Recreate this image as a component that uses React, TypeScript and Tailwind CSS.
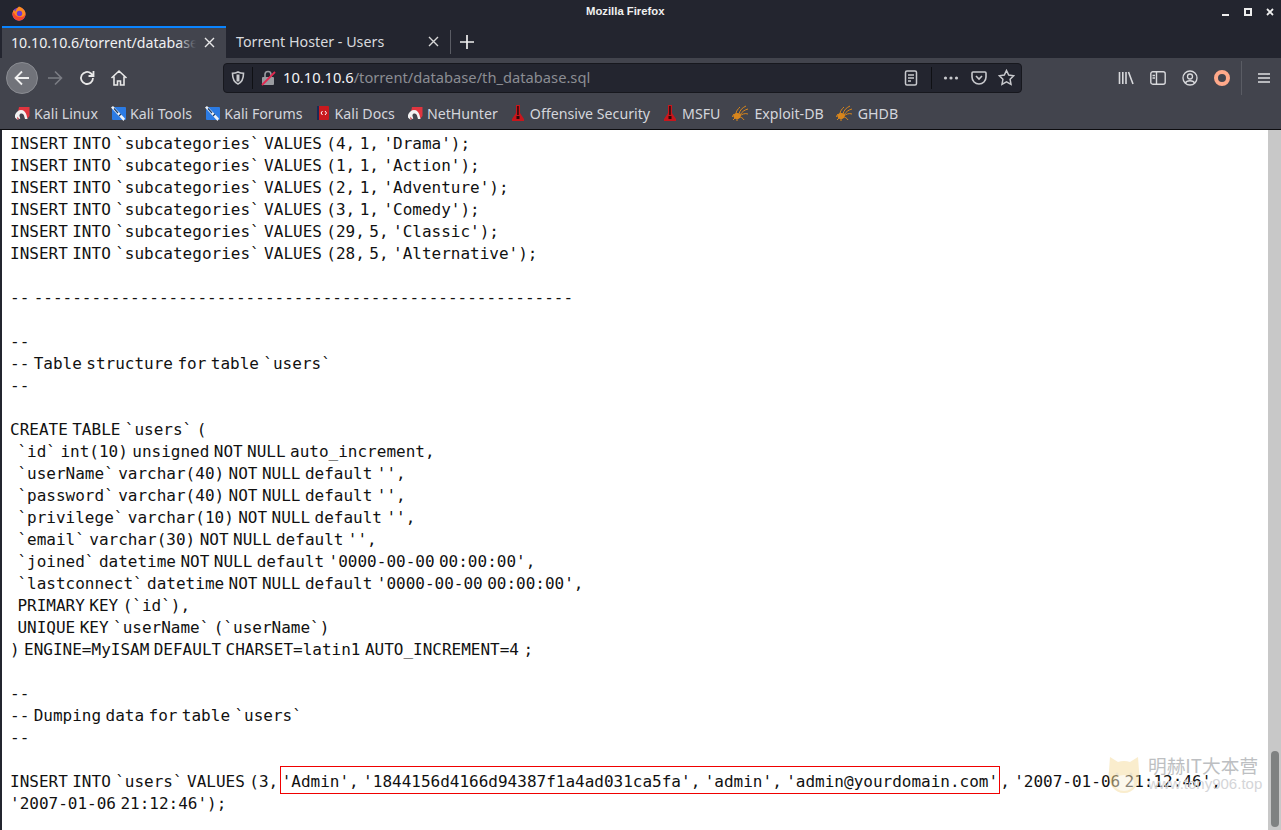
import React from "react";

const lines = [
  "INSERT INTO `subcategories` VALUES (4, 1, 'Drama');",
  "INSERT INTO `subcategories` VALUES (1, 1, 'Action');",
  "INSERT INTO `subcategories` VALUES (2, 1, 'Adventure');",
  "INSERT INTO `subcategories` VALUES (3, 1, 'Comedy');",
  "INSERT INTO `subcategories` VALUES (29, 5, 'Classic');",
  "INSERT INTO `subcategories` VALUES (28, 5, 'Alternative');",
  "",
  "-- --------------------------------------------------------",
  "",
  "--",
  "-- Table structure for table `users`",
  "--",
  "",
  "CREATE TABLE `users` (",
  " `id` int(10) unsigned NOT NULL auto_increment,",
  " `userName` varchar(40) NOT NULL default '',",
  " `password` varchar(40) NOT NULL default '',",
  " `privilege` varchar(10) NOT NULL default '',",
  " `email` varchar(30) NOT NULL default '',",
  " `joined` datetime NOT NULL default '0000-00-00 00:00:00',",
  " `lastconnect` datetime NOT NULL default '0000-00-00 00:00:00',",
  " PRIMARY KEY (`id`),",
  " UNIQUE KEY `userName` (`userName`)",
  ") ENGINE=MyISAM DEFAULT CHARSET=latin1 AUTO_INCREMENT=4 ;",
  "",
  "--",
  "-- Dumping data for table `users`",
  "--",
  "",
];

function Fox() {
  return (
    <svg width="16" height="16" viewBox="0 0 16 16">
      <circle cx="8" cy="9" r="6.600" fill="#7b3fc9" />
      <path d="M8 1.500c3 1 6.500 3.500 6.500 7.500a6.500 6.500 0 0 1-13 0c0-2 .8-3.500 1.800-4.500 0 1 .5 1.700 1.200 2C5 4 6.500 3 8 1.500z" fill="#ff8a1f" />
      <path d="M1.500 9a6.500 6.500 0 0 0 13 0c-1 2-3 3.500-6 3S3.500 10 3 7.500c-1 .5-1.500 1-1.500 1.500z" fill="#f5452f" />
      <circle cx="8.500" cy="8.500" r="2.700" fill="#6d3bd1" />
    </svg>
  );
}

function KaliRed() {
  return (
    <svg width="16" height="16" viewBox="0 0 16 16">
      <path d="M5 2h10.500v9L13 14h-1.500L10 10c-.5-1.500-2-2.500-3.500-1.800L5 9.500 4 7z" fill="#e0353f" />
      <path d="M1 10c1-3 3.500-5 6-5 3 0 4.500 2 5.500 5l1 4h-2.500l-1-3.500C9.500 9 8.500 8.200 7 8.500 5.800 8.800 5.200 9.800 5.500 11l.8 2.500-3 1.200L1 12.500z" fill="#f2f2f2" />
      <path d="M3.300 11.500l1.800 2.500-1.800.8z" fill="#c7303a" />
    </svg>
  );
}

function KaliBlue() {
  return (
    <svg width="16" height="16" viewBox="0 0 16 16">
      <rect x="2" y="2" width="14" height="13" fill="#2b7be4" rx="1" />
      <path d="M1 2.500L3 1l12 12.500-1.500 2.500z" fill="#eef2f7" />
      <path d="M4 3.500l4 4.500M9 11l2-2" stroke="#1d3c66" strokeWidth="1.200" />
    </svg>
  );
}

function Book() {
  return (
    <svg width="16" height="16" viewBox="0 0 16 16">
      <rect x="2" y="1" width="12" height="14" fill="#c9191e" rx="1" />
      <rect x="2" y="1" width="2" height="14" fill="#1b2a55" />
      <path d="M7.500 6L6 8l1.500 2M10 6l1.500 2L10 10" stroke="#fff" strokeWidth="1" fill="none" />
    </svg>
  );
}

function Flask() {
  return (
    <svg width="16" height="18" viewBox="0 0 16 18">
      <path d="M6 1h4v8l4 6v2H2v-2l4-6z" fill="#c8161c" />
      <path d="M7.200 2h1.500v9H7.200z" fill="#2a0a0a" />
      <rect x="6.500" y="12" width="3" height="3" fill="#2a0a0a" />
    </svg>
  );
}

function Spider() {
  return (
    <svg width="18" height="16" viewBox="0 0 18 16" fill="none" stroke="#d9861c" strokeWidth="1">
      <ellipse cx="5" cy="11" rx="3.200" ry="2.600" fill="#d9861c" />
      <path d="M7 9c1-4 3-6 7-8M8 10c2-3 4-5 8-6M8 11c2-2 5-3 8-2M7 12c2 0 4 1 5 3M4 9C4 6 6 4 8 2M3 13l-2 2M5 14v2M2 9L0 12" />
    </svg>
  );
}

function Mark({ icon, label }: { icon: React.ReactNode; label: string }) {
  return (
    <div className="flex items-center gap-[4px]">
      {icon}
      <span className="text-[14.200px] text-[#d4d6dc] whitespace-nowrap">{label}</span>
    </div>
  );
}

export default function App() {
  return (
    <div
      className="w-[1281px] h-[830px] overflow-hidden flex flex-col bg-white"
      style={{ fontFamily: "'Noto Sans', sans-serif" }}
    >
      <div className="h-[58px] shrink-0 bg-[#23252f] flex flex-col">
        <div className="h-[26px] flex items-center relative">
          <div className="pl-[11px]"><Fox /></div>
          <span className="absolute left-[586px] top-[2px] text-[11.300px] font-bold text-[#f0f0f0] leading-[18px]" style={{ fontFamily: "'Liberation Sans', sans-serif" }}>
            Mozilla Firefox
          </span>
          <div className="ml-auto pr-[7px] flex items-center gap-[14px] pb-[3px]">
            <svg width="8" height="8" viewBox="0 0 8 8"><rect y="6" width="7" height="2" fill="#eee" /></svg>
            <svg width="8" height="8" viewBox="0 0 8 8"><rect x="1" y="1" width="6" height="6" fill="none" stroke="#eee" strokeWidth="2" /></svg>
            <svg width="8" height="8" viewBox="0 0 8 8"><path d="M1 1l6 6M7 1L1 7" stroke="#eee" strokeWidth="1.800" /></svg>
          </div>
        </div>
        <div className="flex-1 flex items-stretch pl-[2px]">
          <div className="w-[224px] bg-[#42444d] border-t-2 border-[#0a84ff] flex items-center pl-[9px] pr-[11px] pb-[1px] text-[14.200px] text-[#f0f1f3]">
            <div className="relative flex-1 overflow-hidden">
              <span className="whitespace-nowrap">10.10.10.6/torrent/database/</span>
              <div className="absolute right-0 top-0 bottom-0 w-[18px] bg-gradient-to-r from-transparent to-[#42444d]" />
            </div>
            <svg className="ml-[8px] shrink-0" width="11" height="11" viewBox="0 0 11 11"><path d="M1 1l9 9M10 1l-9 9" stroke="#e8e8e8" strokeWidth="1.400" /></svg>
          </div>
          <div className="w-[224px] flex items-center pl-[10px] pr-[11px] pb-[1px] text-[14.300px] text-[#d8d9dd]">
            <span className="flex-1 whitespace-nowrap">Torrent Hoster - Users</span>
            <svg width="11" height="11" viewBox="0 0 11 11"><path d="M1 1l9 9M10 1l-9 9" stroke="#d8d8d8" strokeWidth="1.400" /></svg>
          </div>
          <div className="w-px h-[24px] my-auto bg-[#5a5c64]" />
          <div className="flex items-center pl-[9px]">
            <svg width="14" height="14" viewBox="0 0 14 14"><path d="M7 0v14M0 7h14" stroke="#eee" strokeWidth="1.700" /></svg>
          </div>
        </div>
      </div>

      <div className="h-[39px] shrink-0 bg-[#42444d] flex items-center pl-[6px]">
        <div className="w-8 h-8 rounded-full bg-[#71737a] border border-[#8a8c92] flex items-center justify-center">
          <svg width="18" height="18" viewBox="0 0 18 18" fill="none" stroke="#f0f0f0" strokeWidth="1.800"><path d="M16 9H2M9 2.500L2.500 9 9 15.500" /></svg>
        </div>
        <svg className="ml-[8px]" width="18" height="18" viewBox="0 0 18 18" fill="none" stroke="#7b7d84" strokeWidth="1.600"><path d="M2 9h14M9 2.500L15.500 9 9 15.500" /></svg>
        <svg className="ml-[14px]" width="18" height="18" viewBox="0 0 18 18" fill="none" stroke="#e8e8e8" strokeWidth="1.800"><path d="M15 9a6 6 0 1 1-2-4.500L15 6.500M15.500 2v5h-5" /></svg>
        <svg className="ml-[14px]" width="18" height="18" viewBox="0 0 18 18" fill="none" stroke="#e8e8e8" strokeWidth="1.600"><path d="M1.500 9L9 2l7.500 7M4 7.500V16h3.500v-4h3v4H14V7.500" /></svg>

        <div className="ml-[95px] w-[799px] h-[30px] rounded-[4px] bg-[#23252f] border border-[#17181e] flex items-center">
          <svg className="ml-[7px]" width="14" height="14" viewBox="0 0 14 14" fill="none" stroke="#c8c9cd" strokeWidth="1.600"><path d="M7 1c2 1 4 1.300 5.500 1.300C12.500 8 10.500 11.500 7 13 3.500 11.500 1.500 8 1.500 2.300 3 2.300 5 2 7 1z" /><path d="M7 3.500v7" strokeWidth="3" /></svg>
          <div className="w-px h-[22px] bg-[#0f1014] ml-[7px]" />
          <svg className="ml-[7px]" width="16" height="16" viewBox="0 0 16 16"><rect x="2" y="7" width="12" height="8" rx="1" fill="#9a9ba0" /><path d="M5 7V4.500a3 3 0 0 1 6 0V7" fill="none" stroke="#9a9ba0" strokeWidth="1.600" /><path d="M2 15L15 2" stroke="#e22850" strokeWidth="1.800" /></svg>
          <span className="ml-[7px] text-[14.700px] text-[#f4f4f6] whitespace-nowrap">
            10.10.10.6<span className="text-[#8b8d93]">/torrent/database/th_database.sql</span>
          </span>
          <svg className="ml-auto" width="14" height="16" viewBox="0 0 14 16" fill="none" stroke="#c8c9cd" strokeWidth="1.500"><rect x="1.500" y="1" width="11" height="14" rx="1.500" /><path d="M4 5h6M4 8h6M4 11h3" /></svg>
          <div className="w-px h-[22px] bg-[#0f1014] ml-[13px]" />
          <svg className="ml-[11px]" width="16" height="4" viewBox="0 0 16 4" fill="#c8c9cd"><circle cx="2.500" cy="2" r="1.600" /><circle cx="8" cy="2" r="1.600" /><circle cx="13.500" cy="2" r="1.600" /></svg>
          <svg className="ml-[12px]" width="16" height="16" viewBox="0 0 16 16" fill="none" stroke="#c8c9cd" strokeWidth="1.600"><path d="M2 2h12a1 1 0 0 1 1 1v4a7 7 0 0 1-14 0V3a1 1 0 0 1 1-1z" /><path d="M5 6l3 3 3-3" /></svg>
          <svg className="ml-[11px] mr-[6px]" width="17" height="17" viewBox="0 0 17 17" fill="none" stroke="#c8c9cd" strokeWidth="1.500"><path d="M8.500 1.500l2.200 4.600 5 .7-3.600 3.500.9 5-4.500-2.400L4 15.300l.9-5L1.300 6.800l5-.7z" /></svg>
        </div>

        <svg className="ml-[96px]" width="16" height="16" viewBox="0 0 16 16" fill="none" stroke="#d8d9dc" strokeWidth="1.600"><path d="M1.500 2v12M4.800 2v12M8 2v12M10.500 2l4.500 12" /></svg>
        <svg className="ml-[16px]" width="16" height="14" viewBox="0 0 16 14" fill="none" stroke="#d8d9dc" strokeWidth="1.400"><rect x=".8" y=".8" width="14.400" height="12.400" rx="2" /><path d="M6.500 1v12M2.500 4.500h2.500M2.500 7h2.500" /></svg>
        <svg className="ml-[16px]" width="16" height="16" viewBox="0 0 16 16" fill="none" stroke="#d8d9dc" strokeWidth="1.300"><circle cx="8" cy="8" r="7" /><circle cx="8" cy="6.500" r="2.500" /><path d="M3.500 13c1-3 8-3 9 0" /></svg>
        <div className="ml-[16px] w-4 h-4 rounded-full border-[4px] border-[#ffa98a] bg-[#42444d]" />
        <div className="ml-[11px] w-px h-[34px] bg-[#5a5c64]" />
        <svg className="ml-[16px]" width="12" height="12" viewBox="0 0 12 12"><path d="M0 2h12M0 6h12M0 10h12" stroke="#e0e0e2" strokeWidth="1.700" /></svg>
      </div>

      <div className="h-[33px] shrink-0 bg-[#42444d] border-b border-[#0c0c0f] flex items-center pl-[14px] pt-[1px] gap-[12px]">
        <Mark icon={<KaliRed />} label="Kali Linux" />
        <Mark icon={<KaliBlue />} label="Kali Tools" />
        <Mark icon={<KaliBlue />} label="Kali Forums" />
        <Mark icon={<Book />} label="Kali Docs" />
        <Mark icon={<KaliRed />} label="NetHunter" />
        <Mark icon={<Flask />} label="Offensive Security" />
        <Mark icon={<Flask />} label="MSFU" />
        <Mark icon={<Spider />} label="Exploit-DB" />
        <Mark icon={<Spider />} label="GHDB" />
      </div>

      <div className="flex-1 min-h-0 flex relative bg-white">
        <div className="w-[2px] bg-[#23252f]" />
        <pre
          className="flex-1 pl-[8px] pt-[3px] text-[16px] leading-[22px] text-[#111] overflow-hidden [word-spacing:-5.200px]"
          style={{ fontFamily: "'DejaVu Sans Mono', monospace" }}
        >
          {lines.map((l, i) => (
            <div key={i} className={l.startsWith(" ") ? "h-[22px] whitespace-pre pl-[3px]" : "h-[22px] whitespace-pre"}>{l}</div>
          ))}
          <div className="h-[22px] whitespace-pre">
            INSERT INTO `users` VALUES (3, <span className="border border-[#f00000] ml-[-3px] px-[1px] pt-[5px] pb-[2px]">'Admin', '1844156d4166d94387f1a4ad031ca5fa', 'admin', 'admin@yourdomain.com'</span>, '2007-01-06 21:12:46',
          </div>
          <div className="h-[22px] whitespace-pre">'2007-01-06 21:12:46');</div>
        </pre>
        <div className="w-[13px] bg-[#c8c8c8] flex items-end justify-center pb-[3px]">
          <div className="w-[8px] h-[76px] rounded-full bg-[#7f8181]" />
        </div>
        <div className="absolute left-[1107px] top-[625px] flex items-center pointer-events-none">
          <svg width="34" height="42" viewBox="0 0 34 42" className="opacity-50">
            <path d="M3 2l8 5c4-1.500 8-1.500 12 0l8-5 1 14c2 10-4 22-15 22S0 26 2 16z" fill="#f6dc9c" />
            <ellipse cx="17" cy="28" rx="10" ry="8" fill="#fbf2dc" />
            <circle cx="10" cy="19" r="1.500" fill="#d8c8a0" />
            <circle cx="24" cy="19" r="1.500" fill="#d8c8a0" />
          </svg>
          <div className="ml-[7px] mt-[-9px]">
            <div className="text-[18.700px] leading-[24px] text-[#bdbfc2]" style={{ fontFamily: "'Noto Sans CJK SC', sans-serif" }}>明赫IT大本营</div>
            <div className="text-[15px] leading-[14px] text-[#d4d5d8]" style={{ fontFamily: "'Liberation Sans', sans-serif" }}>www.tony906.top</div>
          </div>
        </div>
      </div>
    </div>
  );
}
